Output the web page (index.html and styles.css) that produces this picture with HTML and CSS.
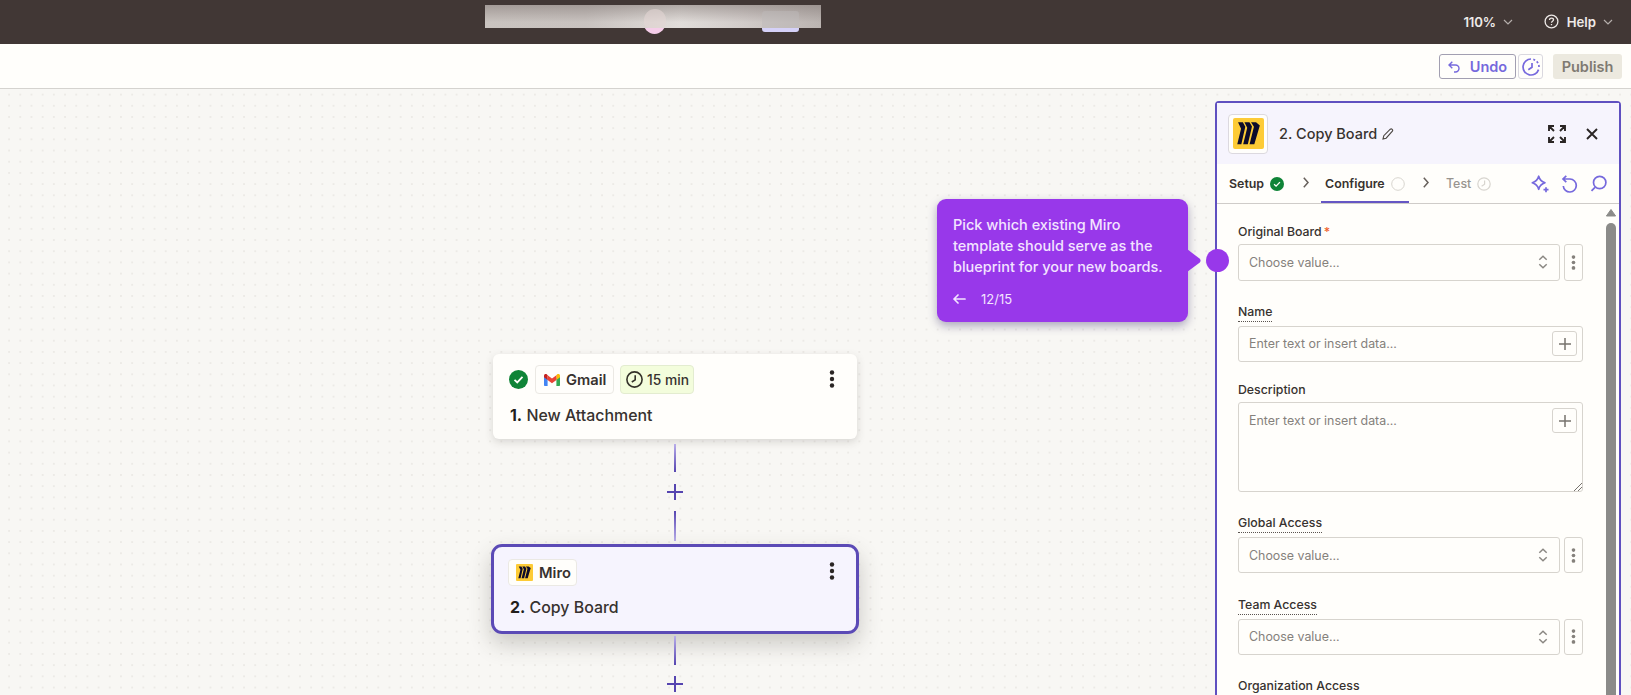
FILE: index.html
```html
<!DOCTYPE html>
<html lang="en">
<head>
<meta charset="utf-8">
	<title>Copy Board</title>
	<link rel="stylesheet" href="styles.css">
</head>
<body>
<!-- shared shapes -->
<svg class="defs">
	<symbol id="miro" viewBox="0 0 32 32">
		<rect width="32" height="32" rx="2" fill="#fdcb36"/>
		<path d="M5.200 4.500h5l2.500 4.500-4.100 18H4.400L8.300 11zM11.800 4.500h5.200l2.600 4.300L15.300 27h-4.800l4.200-17zM18.600 4.500h5.200l3.900 3.200L22 27h-4.900l4.500-18z" fill="#0d0b2b"/>
	</symbol>
	<symbol id="updown" viewBox="0 0 10 14">
		<path d="M1.300 4.800 5 1.300l3.700 3.500M1.300 9.200 5 12.700l3.700-3.500" fill="none" stroke="#8b8883" stroke-width="1.500"/>
	</symbol>
	<symbol id="dots" viewBox="0 0 6 20">
		<circle cx="3" cy="3.500" r="2.200"/><circle cx="3" cy="10" r="2.200"/><circle cx="3" cy="16.500" r="2.200"/>
	</symbol>
	<symbol id="plus" viewBox="0 0 16 16">
		<path d="M8 0v16M0 8h16" stroke="currentColor" stroke-width="2" fill="none"/>
	</symbol>
	<symbol id="check" viewBox="0 0 20 20">
		<circle cx="10" cy="10" r="10" fill="#0f8437"/>
		<path d="M5.800 10.300l2.900 2.800 5.500-5.800" fill="none" stroke="#fffefb" stroke-width="1.900"/>
	</symbol>
	<symbol id="chev-right" viewBox="0 0 6 11">
		<path d="M.8.800 5 5.500.8 10.200" fill="none" stroke="#67605b" stroke-width="1.500"/>
	</symbol>
	<symbol id="chev-down" viewBox="0 0 10 6">
		<path d="M1 1l4 4 4-4" fill="none" stroke="#b5aeab" stroke-width="1.200"/>
	</symbol>
</svg>

<header class="topbar">
	<div class="account">
		<span class="avatar"></span>
		<span class="upgrade"></span>
		<span class="cover"></span>
	</div>
	<div class="top-menu">
		<span class="zoom">110%</span>
		<svg class="chev" width="10" height="6"><use href="#chev-down"/></svg>
		<svg class="help-icon" width="15" height="15" viewBox="0 0 15 15" fill="none" stroke="#eeeae8" stroke-width="1.300"><circle cx="7.500" cy="7.500" r="6.400"/><path d="M5.500 6c0-2.700 4-2.500 4-.2 0 1.500-2 1.500-2 3M7.500 9.900v1.400"/></svg>
		<span class="help">Help</span>
		<svg class="chev" width="10" height="6"><use href="#chev-down"/></svg>
	</div>
</header>

<div class="toolbar">
	<button class="btn undo">
		<svg width="12" height="12" viewBox="0 0 12 12" fill="none" stroke="#7669dd" stroke-width="1.400"><path d="M4.300.800 1 4l3.300 3.200M1 4h6.500a3.500 3.500 0 0 1 0 7H6"/></svg>
		<span>Undo</span>
	</button>
	<button class="btn history">
		<svg width="18" height="18" viewBox="0 0 18 18" fill="none" stroke="#7669dd" stroke-width="1.700"><path d="M9 1a8 8 0 1 0 7.600 10.600"/><path d="M11.300 1.400a8 8 0 0 1 5.700 7.600" stroke-dasharray="2 2"/><path d="M10 5v4.200L6.300 11.700"/></svg>
	</button>
	<button class="btn publish">Publish</button>
</div>

<main class="canvas">
	<div class="flow">
		<div class="card">
			<div class="chips">
				<svg width="19" height="19"><use href="#check"/></svg>
				<span class="chip gmail">
					<svg width="16" height="12" viewBox="0 0 16 12"><path d="M0 2v9.200c0 .5.300.8.800.8H3.600V4.500z" fill="#4285f4"/><path d="M16 2v9.200c0 .5-.3.800-.8.800h-2.800V4.500z" fill="#34a853"/><path d="M12.400 1.200V6L16 3.200V1.800c0-1.600-1.800-2.200-3-1.200z" fill="#fbbc04"/><path d="M0 1.800v1.400L3.600 6V1.200L3 .6C1.800-.4 0 .2 0 1.800z" fill="#c5221f"/><path d="M3.600 1.200V6L8 9.300 12.400 6V1.200L8 4.600z" fill="#ea4335"/></svg>
					<b>Gmail</b>
				</span>
				<span class="chip time">
					<svg width="17" height="17" viewBox="0 0 17 17" fill="none" stroke="#34322a" stroke-width="1.600"><circle cx="8.500" cy="8.500" r="7.600"/><path d="M9.200 4.300v4.500L5.800 11"/></svg>
					<span>15 min</span>
				</span>
				<svg class="more" width="6" height="20"><use href="#dots"/></svg>
			</div>
			<h2><b>1.</b> New Attachment</h2>
		</div>
		<div class="line"></div>
		<svg class="add" width="16" height="16"><use href="#plus"/></svg>
		<div class="line up"></div>
		<div class="card active">
			<div class="chips">
				<span class="chip miro">
					<svg width="17" height="17"><use href="#miro"/></svg>
					<b>Miro</b>
				</span>
				<svg class="more" width="6" height="20"><use href="#dots"/></svg>
			</div>
			<h2><b>2.</b> Copy Board</h2>
		</div>
		<div class="line"></div>
		<svg class="add" width="16" height="16"><use href="#plus"/></svg>
	</div>

	<aside class="panel">
		<div class="panel-head">
			<div class="app-icon"><svg width="31" height="31"><use href="#miro"/></svg></div>
			<h3>2. Copy Board</h3>
			<svg class="pencil" width="12" height="12" viewBox="0 0 12 12" fill="none" stroke="#4b4642" stroke-width="1.100"><path d="M1 11l.8-3.300L8.300 1.200q1-.8 1.900.1t.2 1.900L4.100 10.200z"/></svg>
			<svg class="expand" width="18" height="18" viewBox="0 0 18 18" fill="none" stroke="#2a2524" stroke-width="1.900"><path d="M1 6V1h5M12 1h5v5M17 12v5h-5M6 17H1v-5M1 1l5 5M17 1l-5 5M17 17l-5-5M1 17l5-5"/></svg>
			<svg class="close" width="12" height="12" viewBox="0 0 12 12" fill="none" stroke="#2a2524" stroke-width="1.900"><path d="M1 1l10 10M11 1L1 11"/></svg>
		</div>
		<nav class="tabs">
			<span class="tab setup">Setup <svg width="14" height="14"><use href="#check"/></svg></span>
			<svg class="sep" width="6" height="11"><use href="#chev-right"/></svg>
			<span class="tab on">Configure <svg width="14" height="14" viewBox="0 0 14 14" fill="none" stroke="#d8d5cf"><circle cx="7" cy="7" r="6.300"/></svg></span>
			<svg class="sep" width="6" height="11"><use href="#chev-right"/></svg>
			<span class="tab off">Test <svg width="14" height="14" viewBox="0 0 14 14" fill="none" stroke="#d8d5cf" stroke-width="1.200"><circle cx="7" cy="7" r="6.200"/><path d="M7.600 3.500v3.700L4.600 9.300"/></svg></span>
			<span class="tools">
				<svg width="18" height="18" viewBox="0 0 18 18" fill="none" stroke="#7669dd" stroke-width="1.700"><path d="M7.700 1.200q1.300 5 6.300 6.600-5 1.500-6.300 6.500Q6.300 9.300 1.300 7.800q5-1.600 6.400-6.600z" stroke-linejoin="round"/><path d="M15 12.200v5M12.500 14.700h5"/></svg>
				<svg width="17" height="18" viewBox="0 0 17 18" fill="none" stroke="#7669dd" stroke-width="1.700"><path d="M5.300.800 2 4l3.300 3.200M2 4h7a6.500 6.500 0 1 1-6.700 7"/></svg>
				<svg width="17" height="17" viewBox="0 0 17 17" fill="none" stroke="#7669dd" stroke-width="1.700"><circle cx="9.700" cy="7.500" r="6.200"/><path d="M5 12.300l-3.500 3.500"/></svg>
			</span>
		</nav>
		<div class="panel-body">
			<form class="fields">
				<div class="field">
					<label>Original Board<i>*</i></label>
					<div class="row">
						<div class="select">Choose value...<svg width="10" height="14"><use href="#updown"/></svg></div>
						<div class="opts"><svg width="5" height="17"><use href="#dots"/></svg></div>
					</div>
				</div>
				<div class="field">
					<label class="hint">Name</label>
					<div class="input">Enter text or insert data...<span class="insert"><svg width="12" height="12"><use href="#plus"/></svg></span></div>
				</div>
				<div class="field desc">
					<label>Description</label>
					<div class="input area">Enter text or insert data...<span class="insert"><svg width="12" height="12"><use href="#plus"/></svg></span>
						<svg class="grip" width="8" height="8" viewBox="0 0 8 8" stroke="#77736e"><path d="M0 8l8-8M4 8l4-4"/></svg>
					</div>
				</div>
				<div class="field">
					<label class="hint">Global Access</label>
					<div class="row">
						<div class="select">Choose value...<svg width="10" height="14"><use href="#updown"/></svg></div>
						<div class="opts"><svg width="5" height="17"><use href="#dots"/></svg></div>
					</div>
				</div>
				<div class="field">
					<label class="hint">Team Access</label>
					<div class="row">
						<div class="select">Choose value...<svg width="10" height="14"><use href="#updown"/></svg></div>
						<div class="opts"><svg width="5" height="17"><use href="#dots"/></svg></div>
					</div>
				</div>
				<div class="field">
					<label>Organization Access</label>
				</div>
			</form>
			<div class="scrollbar">
				<svg width="10" height="8" viewBox="0 0 10 8"><path d="M5 .5L9.600 7H.4z" fill="#8b8b89" stroke="#8b8b89" stroke-linejoin="round"/></svg>
				<div class="thumb"></div>
			</div>
		</div>
	</aside>

	<div class="tip">
		<p>Pick which existing Miro</p>
		<p>template should serve as the</p>
		<p>blueprint for your new boards.</p>
		<div class="tip-nav">
			<svg width="13" height="10" viewBox="0 0 13 10" fill="none" stroke="#f3e4ff" stroke-width="1.700" stroke-linecap="round" stroke-linejoin="round"><path d="M5 1L1 5l4 4M1 5h11"/></svg>
			<span>12/15</span>
		</div>
		<svg class="pointer" width="15" height="24" viewBox="0 0 15 24"><path d="M0 0l12.500 9.600q2.200 2.200 0 4.200L0 23z" fill="#9838ea"/></svg>
	</div>
	<div class="beacon"></div>
</main>
</body>
</html>
```
FILE: styles.css
```css
*{margin: 0;padding: 0;box-sizing: border-box;}
body{
	width: 1631px;
	height: 695px;
	overflow: hidden;
	font-family: Inter, "Liberation Sans", sans-serif;
	color: #37322f;
	background: #fffefb;
}
svg{
	display: block;
	flex: none;
}
.defs{
	position: absolute;
	width: 0;
	height: 0;
}
/* top bar */
.topbar{
	display: flex;
	justify-content: space-between;
	height: 44px;
	padding-left: 485px;
	background: #413735;
}
.account{
	position: relative;
	width: 336px;
}
.cover{
	position: absolute;
	left: 0;
	top: 5px;
	width: 336px;
	height: 23px;
	background: linear-gradient(rgba(135,125,122,.55), rgba(220,213,210,.15) 75%), linear-gradient(90deg, #c6c0bc, #c5bfbc 30%, #e2dedb 58%, #d2ccca 75%, #b5aeab);
}
.avatar{
	position: absolute;
	left: 158px;
	top: 9px;
	width: 23px;
	height: 25px;
	border-radius: 50%;
	background: #f5cde9;
}
.avatar:after{
	content: "";
	position: absolute;
	z-index: 2;
	left: 1px;
	top: 0;
	width: 22px;
	height: 19px;
	border-radius: 11px 11px 5px 5px;
	background: rgba(226,213,211,.6);
}
.upgrade{
	position: absolute;
	left: 277px;
	top: 11px;
	width: 37px;
	height: 21px;
	border-radius: 3px;
	background: #d5d1f8;
}
.upgrade:after{
	content: "";
	position: absolute;
	z-index: 2;
	left: 0;
	top: 0;
	width: 37px;
	height: 17px;
	border-radius: 3px 3px 0 0;
	background: rgba(190,185,186,.5);
}
.top-menu{
	display: flex;
	align-items: center;
	padding-right: 18px;
	padding-bottom: 1px;
	font-size: 13.200px;
	font-weight: 600;
	color: #eeeae8;
}
.zoom{
	margin-right: 7px;
	letter-spacing: -.2px;
}
.help-icon{margin: 0 8px 0 31px;}
.help{margin-right: 7px;}
/* toolbar */
.toolbar{
	display: flex;
	justify-content: flex-end;
	height: 45px;
	padding: 10px 9px 0 0;
	border-bottom: 1px solid #d5d3cf;
}
.btn{
	display: flex;
	align-items: center;
	justify-content: center;
	height: 25px;
	border: 1px solid #dad8df;
	border-radius: 3px;
	font: 600 14.500px Inter, sans-serif;
	color: #7669dd;
	background: #fffefb;
}
.undo{
	width: 77px;
	gap: 10px;
	border-color: #a29fb1;
	margin-right: 2px;
}
.history{
	width: 25px;
	margin-right: 10px;
}
.publish{
	width: 69px;
	border: 0;
	color: #7f7a72;
	background: #ece9df;
}
/* canvas */
.canvas{
	position: relative;
	display: flex;
	justify-content: space-between;
	height: 606px;
	background: #f8f7f4 radial-gradient(circle, #eceae6 0.8px, transparent 1.1px) 3.500px 0 / 11.200px 11.200px;
}
.flow{
	display: flex;
	flex-direction: column;
	align-items: center;
	width: 368px;
	margin-left: 491px;
	padding-top: 265px;
}
.card{
	flex: none;
	width: 364px;
	height: 85px;
	padding: 11px 22px 0 16px;
	border-radius: 6px;
	background: #fffefb;
	box-shadow: 0 3px 9px rgba(60,55,45,.17);
}
.card.active{
	width: 368px;
	height: 90px;
	padding: 10px 21px 0 14px;
	border: 3px solid #5b4ab6;
	border-radius: 11px;
	background: #f6f4fe;
	box-shadow: 0 10px 22px rgba(60,55,45,.24);
}
.chips{
	display: flex;
	align-items: center;
	height: 29px;
}
.chip{
	display: flex;
	align-items: center;
	height: 29px;
	border: 1px solid #ebe9e4;
	border-radius: 4px;
	font-size: 14.700px;
	background: #fffefb;
}
.chip b{font-weight: 600;}
.gmail{
	width: 79px;
	margin: 0 6px 0 7px;
	padding-left: 8px;
	gap: 6px;
}
.time{
	width: 74px;
	padding-left: 5px;
	gap: 4px;
	font-size: 13.800px;
	font-weight: 500;
	border-color: #e3ecd0;
	background: #f3fddc;
}
.miro{
	width: 69px;
	height: 27px;
	padding-left: 7px;
	gap: 6px;
}
.active .chips{height: 31px;}
.more{
	margin: -2px 0 0 auto;
	fill: #2a2524;
}
.active .more{margin-top: -4px;}
.card h2{
	margin: 12px 0 0 1px;
	font-size: 15.900px;
	line-height: 20px;
	font-weight: 500;
}
.card.active h2{
	margin: 10px 0 0 2px;
}
.card h2 b{font-weight: 700;color: #221e1c;}
.line{
	flex: none;
	width: 2px;
	height: 28px;
	margin-top: 5px;
	background: linear-gradient(#b9aeea, #5645b0);
}
.line.up{
	height: 30px;
	margin: 11px 0 3px;
	background: linear-gradient(#5645b0, #b9aeea);
}
.add{
	margin-top: 12px;
	color: #5645b0;
}
.active + .line{margin-top: 2px;height: 29px;}
.active + .line + .add{margin-top: 11px;}
/* side panel */
.panel{
	width: 406px;
	height: 620px;
	margin: 12px 10px 0 0;
	border: 2px solid #5f50c0;
	border-radius: 4px;
	background: #fffefb;
}
.panel-head{
	display: flex;
	align-items: center;
	height: 61px;
	padding: 0 21px 0 11px;
	background: #f6f4fd;
}
.app-icon{
	display: flex;
	align-items: center;
	justify-content: center;
	width: 40px;
	height: 40px;
	border: 1px solid #dcd9df;
	border-radius: 4px;
	background: #fffefb;
}
.panel-head h3{
	margin-left: 11px;
	font-size: 14.500px;
	font-weight: 500;
}
.pencil{margin-left: 5px;}
.expand{margin-left: auto;margin-right: 20px;}
.tabs{
	display: flex;
	align-items: center;
	height: 40px;
	padding: 0 0 0 12px;
	border-bottom: 1px solid #cfccc9;
	font-size: 12.400px;
	font-weight: 600;
}
.tab{
	display: flex;
	align-items: center;
	gap: 6px;
}
.tab.setup{width: 54px;}
.sep{margin: -2px 0 0 20px;}
.tab.on{
	align-self: stretch;
	margin: 0 -6px 0 12px;
	padding: 2px 0 0 4px;
	width: 88px;
	border-bottom: 2px solid #6556c4;
}
.tab.off{
	margin-left: 17px;
	font-weight: 500;
	color: #98948f;
}
.tools{
	display: flex;
	align-items: center;
	gap: 12px;
	margin: 0 12px 0 auto;
}
.panel-body{
	display: flex;
	justify-content: space-between;
}
.fields{
	width: 345px;
	margin: 18px 0 0 21px;
}
.field{
	margin-bottom: 21.200px;
}
.field label{
	display: block;
	width: max-content;
	height: 20px;
	margin-bottom: 2px;
	font-size: 12.300px;
	line-height: 20px;
	font-weight: 500;
}
.field label i{
	margin-left: 2px;
	font-style: normal;
	color: #f0622d;
}
.field label.hint{
	margin-bottom: 4px;
	border-bottom: 1px dotted #5a5450;
}
.row{
	display: flex;
	gap: 4px;
}
.select, .input, .opts{
	display: flex;
	align-items: center;
	height: 36.500px;
	border: 1px solid #d7d4ce;
	border-radius: 3px;
	font-size: 12.400px;
	color: #85817c;
}
.select{
	flex: 1;
	justify-content: space-between;
	padding: 0 11px 0 10px;
}
.opts{
	justify-content: center;
	width: 19px;
	fill: #85817c;
}
.input{
	position: relative;
	justify-content: space-between;
	padding: 0 5px 0 10px;
}
.insert{
	display: flex;
	align-items: center;
	justify-content: center;
	width: 25px;
	height: 25px;
	border: 1px solid #d7d4ce;
	border-radius: 3px;
	color: #77736e;
}
.area{
	align-items: flex-start;
	height: 89.500px;
	line-height: 25px;
	padding-top: 5px;
}
.desc{
	margin-top: -3px;
	margin-bottom: 21px;
}
.grip{
	position: absolute;
	right: 0;
	bottom: 0;
}
.scrollbar{
	width: 10px;
	margin: 5px 3px 0 0;
}
.thumb{
	height: 500px;
	margin-top: 6px;
	border-radius: 5px;
	background: #8b8b89;
}
/* tour tooltip */
.tip{
	position: absolute;
	left: 937px;
	top: 110px;
	width: 251px;
	height: 123px;
	padding: 15px 16px;
	border-radius: 9px;
	color: #f3e4ff;
	background: #9838ea;
	box-shadow: 0 4px 10px rgba(50,40,100,.38);
}
.tip p{
	font-size: 14.500px;
	line-height: 21px;
	font-weight: 500;
	white-space: nowrap;
}
.tip-nav{
	display: flex;
	align-items: center;
	gap: 15px;
	height: 20px;
	margin-top: 12px;
	font-size: 13px;
}
.pointer{
	position: absolute;
	left: 250px;
	top: 50px;
}
.beacon{
	position: absolute;
	left: 1206px;
	top: 160px;
	width: 23px;
	height: 23px;
	border-radius: 50%;
	background: #9838ea;
}
```
